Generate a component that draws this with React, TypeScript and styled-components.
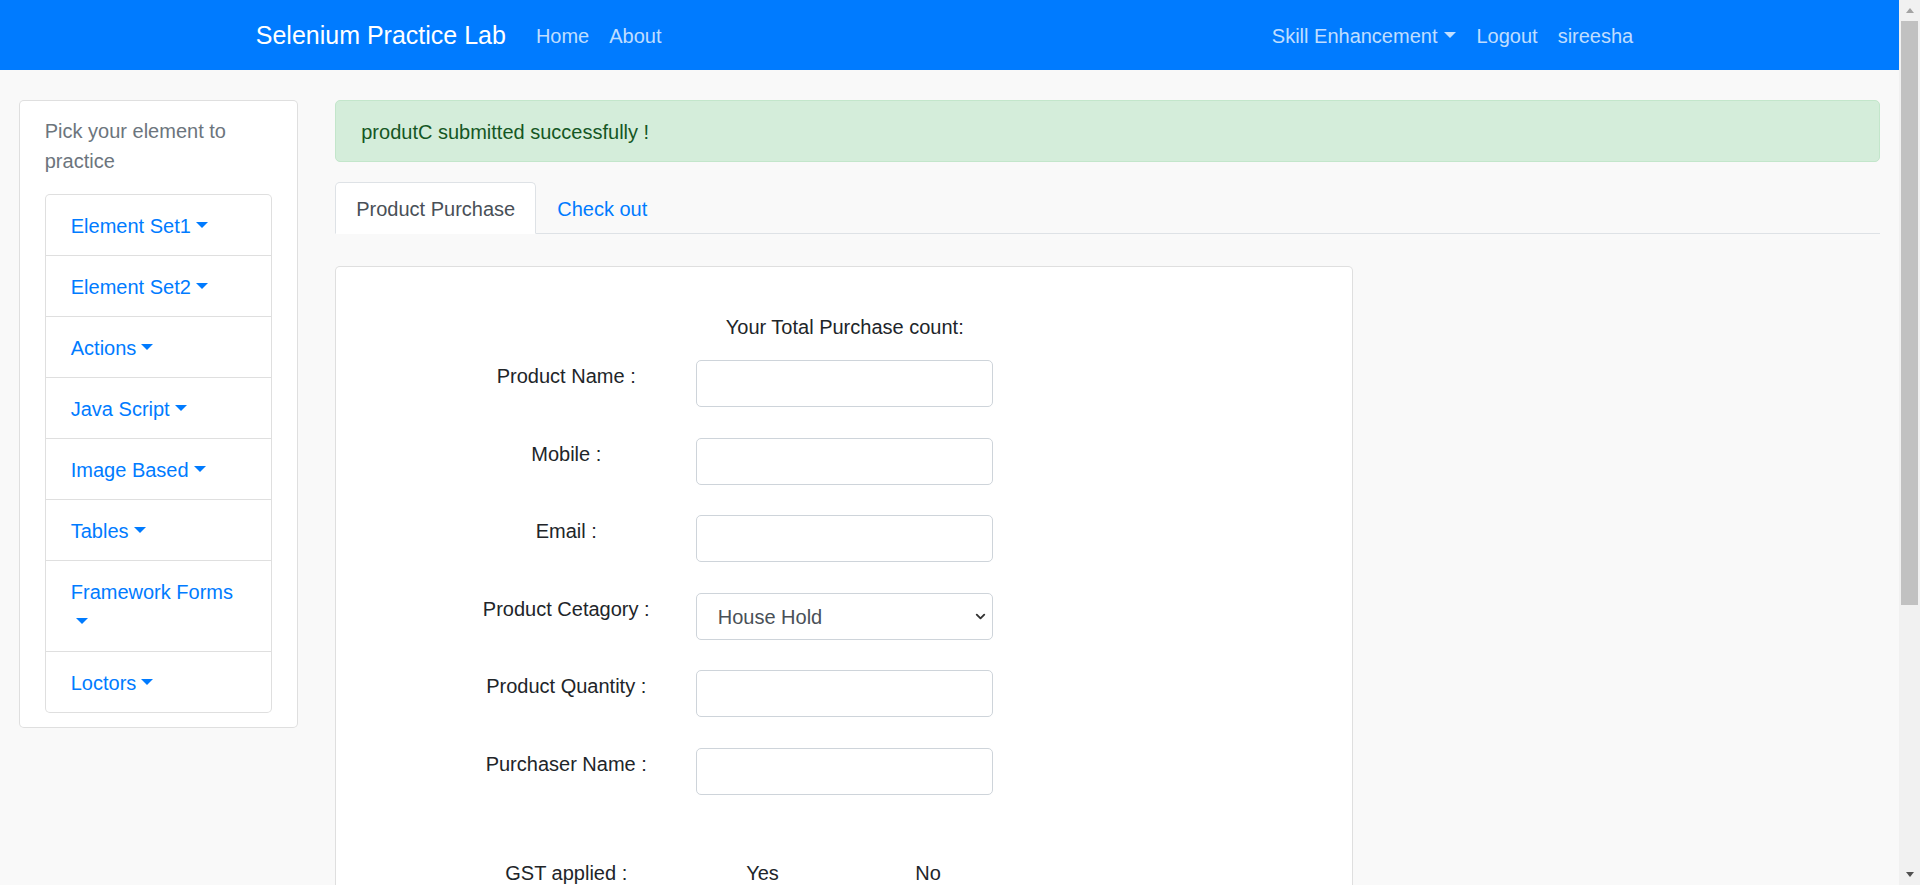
import React from "react";
import styled, { createGlobalStyle } from "styled-components";
import { ChevronDown } from "lucide-react";

const GlobalStyle = createGlobalStyle`
  *, *::before, *::after { box-sizing: border-box; }
  body {
    margin: 0;
    background: #f9f9f9;
    font-family: "Liberation Sans", Arial, sans-serif;
    font-size: 20px;
    line-height: 1.5;
    color: #212529;
  }
`;

const Shell = styled.div`
  display: flex;
  align-items: flex-start;
`;

const Viewport = styled.div`
  flex: 1;
  min-width: 0;
`;

const ScrollRail = styled.div`
  position: sticky;
  top: 0;
  flex: 0 0 21px;
  height: 100vh;
  background: #f1f1f1;
  display: flex;
  flex-direction: column;
  align-items: center;
`;

const ScrollButton = styled.div`
  width: 100%;
  height: 21px;
  display: flex;
  align-items: center;
  justify-content: center;
`;

const ScrollArrow = styled.span<{ $down?: boolean }>`
  width: 0;
  height: 0;
  border-left: 4.5px solid transparent;
  border-right: 4.5px solid transparent;
  ${(p) =>
    p.$down
      ? "border-top: 5px solid #505050;"
      : "border-bottom: 5px solid #a3a3a3;"}
`;

const ScrollTrack = styled.div`
  flex: 1;
  width: 100%;
  display: flex;
  justify-content: center;
`;

const ScrollThumb = styled.div`
  width: 17px;
  height: 584px;
  background: #c1c1c1;
`;

const Navbar = styled.nav`
  height: 70px;
  background: #007bff;
`;

const NavContainer = styled.div`
  max-width: 1425px;
  height: 100%;
  margin: 0 auto;
  padding: 2px 18.75px 0;
  display: flex;
  align-items: center;
`;

const Brand = styled.a`
  font-size: 25px;
  line-height: 37.5px;
  color: #fff;
  margin-right: 20px;
  text-decoration: none;
  white-space: nowrap;
`;

const NavList = styled.div<{ $right?: boolean }>`
  display: flex;
  align-items: center;
  margin-left: ${(p) => (p.$right ? "auto" : "0")};
`;

const NavLink = styled.a`
  padding: 8px 10px;
  color: rgba(255, 255, 255, 0.76);
  text-decoration: none;
  white-space: nowrap;
`;

const Caret = styled.span<{ $gap?: number }>`
  display: inline-block;
  margin-left: ${(p) => p.$gap ?? 5.1}px;
  vertical-align: 5.1px;
  width: 0;
  height: 0;
  border-top: 6px solid currentColor;
  border-right: 6px solid transparent;
  border-left: 6px solid transparent;
`;

const Page = styled.div`
  padding: 0 18.75px 31px;
`;

const Row = styled.div`
  display: flex;
  margin: 0 -18.75px;
`;

const Col = styled.div<{ $span: number }>`
  flex: 0 0 ${(p) => (p.$span / 12) * 100}%;
  max-width: ${(p) => (p.$span / 12) * 100}%;
  padding: 0 18.75px;
`;

const Card = styled.div`
  background: #fff;
  border: 1px solid rgba(0, 0, 0, 0.125);
  border-radius: 5px;
`;

const SideCard = styled(Card)`
  margin-top: 30px;
  padding: 14px 25px;
`;

const SideTitle = styled.p`
  margin: 0 0 18px;
  padding-top: 1px;
  color: #6c757d;
`;

const ListGroup = styled.ul`
  list-style: none;
  margin: 0;
  padding: 0;
  border: 1px solid rgba(0, 0, 0, 0.125);
  border-radius: 5px;
  background: #fff;
`;

const ListItem = styled.li`
  padding: 16px 25px 14px;
  & + & {
    border-top: 1px solid rgba(0, 0, 0, 0.125);
  }
`;

const ItemLink = styled.a`
  color: #007bff;
  text-decoration: none;
`;

const Alert = styled.div`
  margin: 30px 0 20px;
  padding: 16px 25px 14px;
  background: #d4edda;
  border: 1px solid #c3e6cb;
  border-radius: 5px;
  color: #155724;
`;

const Tabs = styled.div`
  display: flex;
  border-bottom: 1px solid #dee2e6;
`;

const Tab = styled.a<{ $active?: boolean }>`
  margin-bottom: -1px;
  padding: 11px 20px 9px;
  border: 1px solid transparent;
  border-color: ${(p) => (p.$active ? "#dee2e6 #dee2e6 #fff" : "transparent")};
  border-radius: 5px 5px 0 0;
  background: ${(p) => (p.$active ? "#fff" : "transparent")};
  color: ${(p) => (p.$active ? "#495057" : "#007bff")};
  text-decoration: none;
`;

const FormCard = styled(Card)`
  margin-top: 32px;
  width: calc((100% + 37.5px) * 2 / 3 - 37.5px);
  min-height: 980px;
  padding: 45px 25px 25px;
`;

const FormRow = styled.div<{ $top?: number; $bottom?: number }>`
  display: grid;
  grid-template-columns: 200px 297px;
  column-gap: 30px;
  margin-left: 105px;
  margin-top: ${(p) => p.$top ?? 0}px;
  margin-bottom: ${(p) => p.$bottom ?? 30.5}px;
`;

const Label = styled.div`
  padding-top: 1px;
  text-align: center;
  white-space: nowrap;
`;

const CountText = styled.div`
  grid-column: 2;
  text-align: center;
  white-space: nowrap;
`;

const Input = styled.input`
  display: block;
  width: 100%;
  height: 47px;
  padding: 7.5px 15px;
  font: inherit;
  color: #495057;
  background: #fff;
  border: 1px solid #ced4da;
  border-radius: 5px;
`;

const SelectWrap = styled.div`
  position: relative;
`;

const Select = styled.select`
  display: block;
  width: 100%;
  height: 47px;
  padding: 8.5px 30px 6.5px 20.5px;
  font: inherit;
  color: #495057;
  background: #fff;
  border: 1px solid #ced4da;
  border-radius: 5px;
  appearance: none;
  -webkit-appearance: none;
`;

const SelectIcon = styled(ChevronDown)`
  position: absolute;
  right: 5px;
  top: 16px;
  pointer-events: none;
  color: #333;
`;

const Options = styled.div`
  display: grid;
  grid-template-columns: 169px auto;
  padding-left: 50px;
  padding-top: 1px;
`;

const sideItems = [
  "Element Set1",
  "Element Set2",
  "Actions",
  "Java Script",
  "Image Based",
  "Tables",
  "Framework Forms",
  "Loctors",
];

const textFields = ["Product Name :", "Mobile :", "Email :"];
const lowerFields = ["Product Quantity :", "Purchaser Name :"];

export default function App() {
  return (
    <>
      <GlobalStyle />
      <Shell>
        <Viewport>
          <Navbar>
            <NavContainer>
              <Brand href="#">Selenium Practice Lab</Brand>
              <NavList>
                <NavLink href="#">Home</NavLink>
                <NavLink href="#">About</NavLink>
              </NavList>
              <NavList $right>
                <NavLink href="#">
                  Skill Enhancement
                  <Caret $gap={7} />
                </NavLink>
                <NavLink href="#">Logout</NavLink>
                <NavLink href="#">sireesha</NavLink>
              </NavList>
            </NavContainer>
          </Navbar>
          <Page>
            <Row>
              <Col $span={2}>
                <SideCard>
                  <SideTitle>Pick your element to practice</SideTitle>
                  <ListGroup>
                    {sideItems.map((label) => (
                      <ListItem key={label}>
                        <ItemLink href="#">
                          {label}
                          <Caret />
                        </ItemLink>
                      </ListItem>
                    ))}
                  </ListGroup>
                </SideCard>
              </Col>
              <Col $span={10}>
                <Alert>produtC submitted successfully !</Alert>
                <Tabs>
                  <Tab $active href="#">
                    Product Purchase
                  </Tab>
                  <Tab href="#">Check out</Tab>
                </Tabs>
                <FormCard>
                  <FormRow $bottom={18}>
                    <CountText>Your Total Purchase count:</CountText>
                  </FormRow>
                  {textFields.map((f) => (
                    <FormRow key={f}>
                      <Label>{f}</Label>
                      <Input type="text" />
                    </FormRow>
                  ))}
                  <FormRow>
                    <Label>Product Cetagory :</Label>
                    <SelectWrap>
                      <Select defaultValue="House Hold">
                        <option>House Hold</option>
                        <option>Electronics</option>
                        <option>Grocery</option>
                      </Select>
                      <SelectIcon size={15} strokeWidth={3} />
                    </SelectWrap>
                  </FormRow>
                  {lowerFields.map((f) => (
                    <FormRow key={f}>
                      <Label>{f}</Label>
                      <Input type="text" />
                    </FormRow>
                  ))}
                  <FormRow $top={62}>
                    <Label>GST applied :</Label>
                    <Options>
                      <span>Yes</span>
                      <span>No</span>
                    </Options>
                  </FormRow>
                </FormCard>
              </Col>
            </Row>
          </Page>
        </Viewport>
        <ScrollRail>
          <ScrollButton>
            <ScrollArrow />
          </ScrollButton>
          <ScrollTrack>
            <ScrollThumb />
          </ScrollTrack>
          <ScrollButton>
            <ScrollArrow $down />
          </ScrollButton>
        </ScrollRail>
      </Shell>
    </>
  );
}
